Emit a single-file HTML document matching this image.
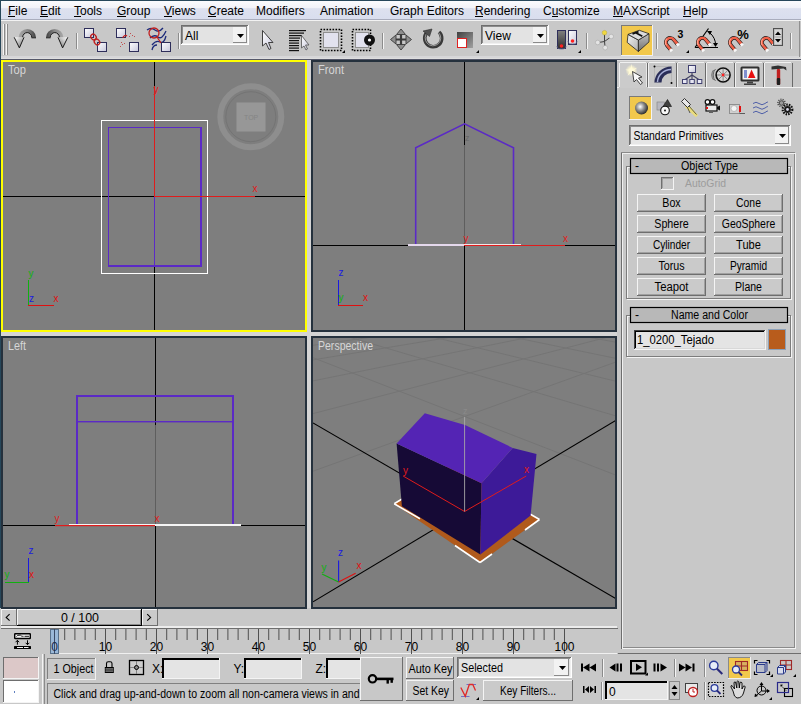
<!DOCTYPE html>
<html><head><meta charset="utf-8">
<style>
*{margin:0;padding:0}
html,body{width:801px;height:704px;overflow:hidden;background:#c8c8c8}
svg{position:absolute;left:0;top:0;display:block}
text{font-family:"Liberation Sans",sans-serif}
</style></head>
<body>
<svg width="801" height="704" viewBox="0 0 801 704">
<defs>
 <linearGradient id="gMenu" x1="0" y1="0" x2="0" y2="1">
  <stop offset="0" stop-color="#fbfbfd"/><stop offset="0.4" stop-color="#f1f2f8"/><stop offset="0.42" stop-color="#dde1ef"/><stop offset="1" stop-color="#d9deee"/>
 </linearGradient>
 <linearGradient id="gArrow" x1="0" y1="0" x2="1" y2="1">
  <stop offset="0" stop-color="#ffffff"/><stop offset="1" stop-color="#707070"/>
 </linearGradient>
 <linearGradient id="gArc" x1="0" y1="0" x2="1" y2="0">
  <stop offset="0" stop-color="#a8a8a8"/><stop offset="0.5" stop-color="#8a8a8a"/><stop offset="1" stop-color="#404040"/>
 </linearGradient>
 <linearGradient id="gBox" x1="0" y1="0" x2="1" y2="1">
  <stop offset="0" stop-color="#ffffff"/><stop offset="1" stop-color="#c8c8dc"/>
 </linearGradient>
 <linearGradient id="gDark" x1="0" y1="0" x2="1" y2="1">
  <stop offset="0" stop-color="#404040"/><stop offset="1" stop-color="#a0a0a0"/>
 </linearGradient>
 <linearGradient id="gDarkV" x1="0" y1="0" x2="0" y2="1">
  <stop offset="0" stop-color="#808080"/><stop offset="1" stop-color="#303030"/>
 </linearGradient>
 <radialGradient id="gSphere" cx="0.4" cy="0.4" r="0.6">
  <stop offset="0" stop-color="#ffffff"/><stop offset="0.5" stop-color="#909090"/><stop offset="1" stop-color="#303030"/>
 </radialGradient>
 <linearGradient id="gMag" x1="0" y1="0" x2="1" y2="1">
  <stop offset="0" stop-color="#ff8a70"/><stop offset="1" stop-color="#d03a20"/>
 </linearGradient>
<linearGradient id="gKeyF" x1="0" y1="0" x2="1" y2="1"><stop offset="0" stop-color="#f4f4f4"/><stop offset="1" stop-color="#b0b0b0"/></linearGradient>
<linearGradient id="gKeyR" x1="0" y1="0" x2="0" y2="1"><stop offset="0" stop-color="#c0c0c0"/><stop offset="1" stop-color="#707070"/></linearGradient>
<radialGradient id="gGlow"><stop offset="0" stop-color="#ffffff"/><stop offset="0.4" stop-color="#fff8d0"/><stop offset="1" stop-color="#fff8d0" stop-opacity="0"/></radialGradient>
</defs>
<!-- ===== MENU BAR ===== -->
<rect x="0" y="0" width="801" height="1" fill="#27475a"/>
<rect x="0" y="1" width="801" height="18" fill="url(#gMenu)"/>
<rect x="0" y="19" width="801" height="1" fill="#a9adbd"/>
<g font-size="12" fill="#000">
 <text x="8" y="15">File</text><rect x="8" y="16" width="7" height="1"/>
 <text x="40" y="15">Edit</text><rect x="40" y="16" width="8" height="1"/>
 <text x="74" y="15">Tools</text><rect x="74" y="16" width="7" height="1"/>
 <text x="117" y="15">Group</text><rect x="117" y="16" width="9" height="1"/>
 <text x="164" y="15">Views</text><rect x="164" y="16" width="8" height="1"/>
 <text x="208" y="15">Create</text><rect x="208" y="16" width="8" height="1"/>
 <text x="256" y="15">Modifiers</text>
 <text x="320" y="15">Animation</text>
 <text x="390" y="15">Graph Editors</text>
 <text x="475" y="15">Rendering</text><rect x="475" y="16" width="8" height="1"/>
 <text x="543" y="15">Customize</text><rect x="552" y="16" width="6" height="1"/>
 <text x="613" y="15">MAXScript</text><rect x="613" y="16" width="10" height="1"/>
 <text x="683" y="15">Help</text><rect x="683" y="16" width="8" height="1"/>
</g>
<!-- ===== TOOLBAR ===== -->
<rect x="0" y="20" width="801" height="1" fill="#f2f2f2"/>
<rect x="0" y="56" width="801" height="2" fill="#d6d6d8"/>
<rect x="0" y="58" width="801" height="1" fill="#dedede"/>
<rect x="0" y="59" width="617" height="1" fill="#55586a"/>
<rect x="0" y="0" width="1" height="608" fill="#27475a"/>
<!-- grip -->
<rect x="3" y="24" width="1" height="31" fill="#f6f6f6"/><rect x="4" y="24" width="1" height="31" fill="#8a8a8a"/>
<rect x="6" y="24" width="1" height="31" fill="#f6f6f6"/><rect x="7" y="24" width="1" height="31" fill="#8a8a8a"/>
<!-- undo -->
<g id="undo">
<path d="M18.6,37.5 A8.7,8.6 0 0 1 36,37.5 L31.8,37.5 A4.5,4.8 0 0 0 22.6,37.5 Z" fill="url(#gArc)"/>
<path d="M31.8,37.5 A4.5,4.8 0 0 0 22.6,37.5" fill="none" stroke="#1a1a1a" stroke-width="1"/>
<path d="M31.5,37.8 L36,37.8" stroke="#1a1a1a" stroke-width="1"/>
<path d="M14.2,37.3 L24,37.3 L19.4,47.9 Z" fill="url(#gArrow)"/>
<path d="M24,37.3 L19.4,47.9 L14.2,37.3" fill="none" stroke="#1a1a1a" stroke-width="1"/>
</g>
<!-- redo -->
<use href="#undo" transform="translate(82,0) scale(-1,1)"/>
<!-- sep -->
<rect x="76" y="33" width="1" height="16" fill="#8c8c8c"/><rect x="77" y="33" width="1" height="16" fill="#f4f4f4"/>
<!-- link -->
<rect x="84.5" y="28.5" width="9" height="9" fill="url(#gBox)" stroke="#2e2e5a"/>
<rect x="97.5" y="42.5" width="9" height="9" fill="url(#gBox)" stroke="#2e2e5a"/>
<ellipse cx="93.5" cy="37" rx="2.5" ry="3" fill="none" stroke="#c02020" stroke-width="1.3" transform="rotate(-40 93.5 37)"/>
<ellipse cx="97" cy="42" rx="2.5" ry="3" fill="none" stroke="#c02020" stroke-width="1.3" transform="rotate(-40 97 42)"/>
<!-- unlink -->
<rect x="116.5" y="28.5" width="9" height="9" fill="url(#gBox)" stroke="#2e2e5a"/>
<rect x="129.5" y="42.5" width="9" height="9" fill="url(#gBox)" stroke="#2e2e5a"/>
<path d="M123,38 A2.5,2.5 0 0 1 127,36" fill="none" stroke="#c02020" stroke-width="1.3"/>
<g fill="#c05050"><rect x="130" y="33" width="1" height="1"/><rect x="132" y="35" width="1" height="1"/><rect x="129" y="36" width="1" height="1"/><rect x="134" y="36" width="1" height="1"/><rect x="121" y="42" width="1" height="1"/><rect x="122" y="44" width="1" height="1"/><rect x="120" y="46" width="1" height="1"/><rect x="124" y="43" width="1" height="1"/></g>
<!-- bind -->
<path d="M150,38 Q154,34 158,37 T166,31" fill="none" stroke="#1c2a7a" stroke-width="1.3"/>
<path d="M152,45 Q156,40 160,42 T166,36" fill="none" stroke="#1c2a7a" stroke-width="1.3"/>
<path d="M147,30 Q151,27 155,30 T163,28" fill="none" stroke="#1c2a7a" stroke-width="1.3"/>
<path d="M152,50 Q153,45 157,45" fill="none" stroke="#1c2a7a" stroke-width="1.3"/>
<circle cx="154" cy="33" r="5" fill="none" stroke="#c02020" stroke-width="1.3"/>
<path d="M157,37 L161,43" stroke="#c02020" stroke-width="1.3"/>
<rect x="161.5" y="42.5" width="9" height="9" fill="url(#gBox)" stroke="#2e2e5a"/>
<!-- sep -->
<rect x="178" y="33" width="1" height="16" fill="#8c8c8c"/><rect x="179" y="33" width="1" height="16" fill="#f4f4f4"/>
<!-- dropdown All -->
<rect x="181" y="25" width="68" height="20" fill="#ffffff"/>
<rect x="181" y="25" width="67" height="19" fill="#6e6e6e"/>
<rect x="182" y="26" width="66" height="18" fill="#f0f0f0"/>
<rect x="182" y="26" width="65" height="17" fill="#8c8c8c"/>
<rect x="183" y="27" width="64" height="16" fill="#e3e3e3"/>
<rect x="233" y="27" width="14" height="16" fill="#f2f2f2"/>
<rect x="233" y="42" width="14" height="1" fill="#8a8a8a"/><rect x="246" y="27" width="1" height="16" fill="#8a8a8a"/>
<path d="M237,34 L244,34 L240.5,38 Z" fill="#000"/>
<text x="185" y="40" font-size="12" fill="#000">All</text>
<!-- select arrow -->
<path d="M262.5,30.5 L262.5,46 L266,43 L269,49.5 L271,48.5 L268.5,42.5 L273,42.5 Z" fill="url(#gBox)" stroke="#404040" stroke-width="1"/>
<!-- select by name -->
<g fill="#111"><rect x="289" y="30" width="17" height="1.2"/><rect x="289" y="32.5" width="15" height="1.2"/><rect x="289" y="35" width="13" height="1.2"/><rect x="289" y="37.5" width="11" height="1.2"/><rect x="289" y="40" width="10" height="1.2"/><rect x="289" y="42.5" width="10" height="1.2"/><rect x="289" y="45" width="10" height="1.2"/><rect x="289" y="47.5" width="10" height="1.2"/><rect x="289" y="50" width="10" height="1.2"/></g>
<path d="M301.5,35.5 L301.5,48 L304,46 L306,50 L307.5,49 L305.5,45 L309,45 Z" fill="url(#gBox)" stroke="#505050" stroke-width="0.8"/>
<!-- rect selection -->
<rect x="323.5" y="32.5" width="15" height="15" fill="#e2e2ee" stroke="#909090"/>
<rect x="320.5" y="29.5" width="21" height="21" fill="none" stroke="#000" stroke-width="1.6" stroke-dasharray="1.6 1.4"/>
<path d="M342,53 L345,53 L345,50 Z" fill="#000"/>
<!-- window/crossing -->
<rect x="355.5" y="32.5" width="13" height="15" fill="#e2e2ee" stroke="#909090"/>
<rect x="352.5" y="29.5" width="18" height="21" fill="none" stroke="#000" stroke-width="1.6" stroke-dasharray="1.6 1.4"/>
<circle cx="369.5" cy="40" r="5.5" fill="#111"/><circle cx="369.5" cy="40" r="1.6" fill="#fff"/>
<!-- sep -->
<rect x="382" y="33" width="1" height="16" fill="#8c8c8c"/><rect x="383" y="33" width="1" height="16" fill="#f4f4f4"/>
<!-- move -->
<path d="M401,32 L401,47 M393.5,39.5 L408.5,39.5" stroke="#3a3a3a" stroke-width="2.2"/>
<g fill="#8e8e8e" stroke="#3a3a3a" stroke-width="0.9" stroke-linejoin="round">
<path d="M401,29 L405.5,34.5 L396.5,34.5 Z"/>
<path d="M401,50 L405.5,44.5 L396.5,44.5 Z"/>
<path d="M390.5,39.5 L396,35 L396,44 Z"/>
<path d="M411.5,39.5 L406,35 L406,44 Z"/>
</g>
<!-- rotate -->
<path d="M428,31.5 A8.5,8.5 0 1 0 439,32" fill="none" stroke="#3a3a3a" stroke-width="3.6"/>
<path d="M428,32 A7.8,7.8 0 1 0 438.5,32.5" fill="none" stroke="#b0b0b0" stroke-width="1" opacity="0.8"/>
<path d="M423,31 L432,29 L429.5,36.5 Z" fill="#505050" stroke="#303030" stroke-width="0.6"/>
<!-- scale -->
<rect x="457" y="32" width="16" height="16" fill="url(#gDark)"/>
<rect x="457.5" y="38.5" width="9" height="9" fill="#fff" stroke="#e02020"/>
<path d="M476,53 L479,53 L479,50 Z" fill="#000"/>
<!-- dropdown View -->
<rect x="481" y="25" width="68" height="20" fill="#ffffff"/>
<rect x="481" y="25" width="67" height="19" fill="#6e6e6e"/>
<rect x="482" y="26" width="66" height="18" fill="#f0f0f0"/>
<rect x="482" y="26" width="65" height="17" fill="#8c8c8c"/>
<rect x="483" y="27" width="64" height="16" fill="#e3e3e3"/>
<rect x="533" y="27" width="14" height="16" fill="#f2f2f2"/>
<rect x="533" y="42" width="14" height="1" fill="#8a8a8a"/><rect x="546" y="27" width="1" height="16" fill="#8a8a8a"/>
<path d="M537,34 L544,34 L540.5,38 Z" fill="#000"/>
<text x="485" y="40" font-size="12" fill="#000">View</text>
<!-- pivot -->
<rect x="557.5" y="30.5" width="8" height="18" fill="url(#gDarkV)" stroke="#2e2e5a"/>
<rect x="568.5" y="30.5" width="8" height="14" fill="url(#gBox)" stroke="#2e2e5a"/>
<path d="M557,46 A4.5,3 0 0 0 566,46" fill="none" stroke="#606080" stroke-width="0.8"/>
<path d="M568,41 A4.5,3 0 0 0 577,41" fill="none" stroke="#606080" stroke-width="0.8"/>
<circle cx="561.5" cy="46" r="1.8" fill="#ff2020"/><circle cx="572.5" cy="41" r="1.8" fill="#ff2020"/>
<path d="M578,53 L581,53 L581,50 Z" fill="#000"/>
<!-- sep -->
<rect x="586" y="33" width="1" height="16" fill="#8c8c8c"/><rect x="587" y="33" width="1" height="16" fill="#f4f4f4"/>
<!-- manipulate -->
<path d="M604.5,34 L604.5,41.5 M604.5,41.5 L610,37.5 M604.5,41.5 L598.5,42.5 M604.5,41.5 L605,46.5" stroke="#404040" stroke-width="1" fill="none"/>
<circle cx="604.5" cy="32.7" r="2.3" fill="#f0d840" stroke="#b0a030" stroke-width="0.4"/>
<circle cx="611.2" cy="36.5" r="2.3" fill="#e4e4e4" stroke="#a0a0a0" stroke-width="0.5"/>
<circle cx="597.7" cy="42.5" r="2.3" fill="#e4e4e4" stroke="#a0a0a0" stroke-width="0.5"/>
<circle cx="605.2" cy="47.7" r="2.3" fill="#e4e4e4" stroke="#a0a0a0" stroke-width="0.5"/>
<!-- yellow keyboard override button -->
<rect x="621" y="25" width="32" height="31" fill="#f0f0f0"/>
<rect x="621" y="25" width="31" height="30" fill="#7a7a7a"/>
<rect x="622" y="26" width="30" height="29" fill="#f2c84c"/>
<path d="M628,34.4 L638.4,40 L638.4,51.5 L627.2,42.4 Z" fill="url(#gKeyF)" stroke="#202020" stroke-width="0.8"/>
<path d="M638.4,40 L649,33.7 L649,41.9 L638.4,51.5 Z" fill="url(#gKeyR)" stroke="#202020" stroke-width="0.8"/>
<path d="M628,34.4 L639.3,30.3 L649,33.7 L638.4,40 Z" fill="#dcdcdc" stroke="#202020" stroke-width="0.8"/>
<path d="M632.5,33.8 L638.5,31.6 M636.2,33 L642.3,36.3" stroke="#101010" stroke-width="1.8"/>
<!-- sep -->
<rect x="656" y="33" width="1" height="16" fill="#8c8c8c"/><rect x="657" y="33" width="1" height="16" fill="#f4f4f4"/>
<!-- magnets -->
<g id="mag" transform="translate(670.3,42.4) rotate(-39.7)">
<path d="M-4.4,6.3 L-4.4,0 A4.4,4.4 0 0 1 4.4,0 L4.4,6.3" fill="none" stroke="#1a1a1a" stroke-width="3.8"/>
<path d="M-4.4,6.3 L-4.4,0 A4.4,4.4 0 0 1 4.4,0 L4.4,6.3" fill="none" stroke="#f06048" stroke-width="2.6"/>
<path d="M-4.8,0 A4.4,4.4 0 0 1 0,-4.8" fill="none" stroke="#ffa590" stroke-width="1"/>
<rect x="-5.9" y="5.2" width="3" height="2.6" fill="#f8f8f8"/>
<rect x="2.9" y="5.2" width="3" height="2.6" fill="#f8f8f8"/>
</g>
<text x="677.5" y="37.8" font-size="10.5" font-weight="bold" fill="#000">3</text>
<path d="M686,53 L689,53 L689,50 Z" fill="#000"/>
<path d="M695,47.5 L718,47.5 M695,47.5 L708.5,28.5" stroke="#000" stroke-width="1.2" fill="none"/>
<path d="M709,32 Q716,38 715.5,45.5" stroke="#000" stroke-width="1" fill="none"/>
<path d="M707,31 L712,31 L710,35 Z M713,43 L718,43 L715.5,47 Z" fill="#000"/>
<use href="#mag" x="32" y="0"/>
<use href="#mag" x="64" y="0"/>
<text x="737.3" y="38.6" font-size="13" font-weight="bold" fill="#000">%</text>
<use href="#mag" x="96" y="0"/>
<rect x="773.5" y="28.5" width="9" height="17" fill="#a8a8a8" stroke="#505050"/>
<rect x="774.5" y="29.5" width="7" height="7" fill="#d8d8d8"/>
<rect x="774.5" y="37.5" width="7" height="7" fill="#d8d8d8"/>
<path d="M775,35 L781,35 L778,31.5 Z M775,39 L781,39 L778,42.5 Z" fill="#000"/>
<!-- sep -->
<rect x="790" y="33" width="1" height="16" fill="#8c8c8c"/><rect x="791" y="33" width="1" height="16" fill="#f4f4f4"/>
<rect x="799" y="21" width="1" height="36" fill="#909090"/>
<!-- ===== VIEWPORTS ===== -->
<rect x="1" y="60" width="616" height="548" fill="#d4d4d4"/>
<rect x="1" y="60" width="306" height="272" fill="#ffff00"/>
<rect x="3" y="62" width="302" height="268" fill="#7e7e7e"/>
<rect x="311" y="60" width="306" height="272" fill="#25313d"/>
<rect x="313" y="62" width="302" height="268" fill="#7e7e7e"/>
<rect x="1" y="336" width="306" height="273" fill="#25313d"/>
<rect x="3" y="338" width="302" height="269" fill="#7e7e7e"/>
<rect x="311" y="336" width="306" height="273" fill="#25313d"/>
<rect x="313" y="338" width="302" height="269" fill="#7e7e7e"/>

<!-- TOP -->
<g shape-rendering="crispEdges">
<rect x="3" y="196" width="302" height="1" fill="#000"/>
<rect x="154" y="62" width="1" height="268" fill="#000"/>
<rect x="101.5" y="120.5" width="106" height="153" fill="none" stroke="#fff" stroke-width="1.6"/>
<rect x="108.5" y="127.5" width="92.5" height="138.5" fill="none" stroke="#5b2ac6" stroke-width="1.6"/>
<rect x="154" y="196" width="1" height="70" fill="#5b2ac6"/>
<rect x="154" y="86" width="1" height="111" fill="#e01c1c"/>
<rect x="154" y="196" width="101" height="1" fill="#e01c1c"/>
</g>
<text x="153.5" y="93" font-size="10" fill="#e01c1c">y</text>
<text x="252.5" y="192" font-size="10" fill="#e01c1c">x</text>
<text x="8" y="74" font-size="12" fill="#d6d6d6" textLength="18" lengthAdjust="spacingAndGlyphs">Top</text>
<circle cx="250.8" cy="116.7" r="30.5" fill="none" stroke="#8e8e8e" stroke-width="6"/>
<circle cx="250.8" cy="116.7" r="25" fill="none" stroke="#747474" stroke-width="1"/>
<rect x="236.5" y="102.5" width="29" height="29" fill="#979797"/>
<text x="244" y="120" font-size="7" fill="#858585">TOP</text>
<!-- tripod top -->
<rect x="28" y="280" width="1" height="26" fill="#10b010"/>
<rect x="28" y="305" width="26" height="1" fill="#e01010"/>
<text x="28.5" y="277" font-size="10" fill="#10b010">y</text>
<text x="29" y="301.5" font-size="10" fill="#1a1ae0">z</text>
<text x="53.5" y="301.5" font-size="10" fill="#e01010">x</text>

<!-- FRONT -->
<g shape-rendering="crispEdges">
<rect x="313" y="245" width="302" height="1" fill="#000"/>
<rect x="464" y="62" width="1" height="83" fill="#000"/>
<rect x="464" y="245" width="1" height="85" fill="#000"/>
<rect x="464" y="145" width="1" height="100" fill="#5e5e5e"/>
</g>
<path d="M415.7,245 L415.7,147.8 L464.5,123.9 L513.5,147.8 L513.5,245" fill="none" stroke="#5b2ac6" stroke-width="1.6"/>
<rect x="408" y="244" width="56" height="2" fill="#e4d8ec"/>
<rect x="464" y="244" width="57" height="2" fill="#f2e6e6"/>
<rect x="464" y="245" width="101" height="1" fill="#e01c1c"/>
<text x="463.5" y="242" font-size="10" fill="#e01c1c">y</text>
<text x="563" y="242" font-size="10" fill="#e01c1c">x</text>
<text x="465" y="141" font-size="9" fill="#666">z</text>
<text x="318" y="74" font-size="12" fill="#d6d6d6" textLength="26" lengthAdjust="spacingAndGlyphs">Front</text>
<rect x="338" y="280" width="1" height="26" fill="#1a1ae0"/>
<rect x="338" y="305" width="25" height="1" fill="#e01010"/>
<text x="338.5" y="276" font-size="10" fill="#1a1ae0">z</text>
<text x="338.5" y="301" font-size="10" fill="#10b010">y</text>
<text x="363" y="301" font-size="10" fill="#e01010">x</text>

<!-- LEFT -->
<g shape-rendering="crispEdges">
<rect x="3" y="525" width="302" height="1" fill="#000"/>
<rect x="155" y="338" width="1" height="87" fill="#000"/>
<rect x="155" y="525" width="1" height="82" fill="#000"/>
<rect x="155" y="425" width="1" height="100" fill="#5e5e5e"/>
</g>
<path d="M77,525 L77,396 L233,396 L233,525" fill="none" stroke="#5b2ac6" stroke-width="2"/>
<rect x="77" y="421" width="156" height="1.4" fill="#5b2ac6"/>
<rect x="69" y="524" width="172" height="2" fill="#f4f4f4"/>
<rect x="55" y="525" width="100" height="1.2" fill="#e01c1c"/>
<text x="54.5" y="522" font-size="10" fill="#e01c1c">y</text>
<text x="154.5" y="522" font-size="10" fill="#e01c1c">x</text>
<text x="8" y="350" font-size="12" fill="#d6d6d6" textLength="18" lengthAdjust="spacingAndGlyphs">Left</text>
<rect x="28" y="558" width="1" height="25" fill="#1a1ae0"/>
<rect x="5" y="582" width="24" height="1" fill="#10b010"/>
<text x="28.5" y="553.5" font-size="10" fill="#1a1ae0">z</text>
<text x="4.5" y="578" font-size="10" fill="#10b010">y</text>
<text x="29" y="578" font-size="10" fill="#e01010">x</text>

<!-- PERSPECTIVE -->
<svg x="313" y="338" width="302" height="269" viewBox="313 338 302 269" overflow="hidden">
<g stroke="#757575" stroke-width="1" fill="none">
<path d="M313,357.7 L615,474.8"/>
<path d="M313,326.4 L615,415.7"/>
<path d="M313,308.0 L615,381.0"/>
<path d="M313,295.9 L615,358.2"/>
<path d="M313,287.4 L615,342.0"/>
<path d="M313,281.0 L615,330.0"/>
<path d="M313,276.1 L615,320.7"/>
<path d="M313,272.2 L615,313.2"/>
<path d="M313,269.0 L615,307.2"/>
<path d="M313,471.2 L615,362.3"/>
<path d="M313,413.6 L615,335.2"/>
<path d="M313,380.9 L615,319.9"/>
<path d="M313,359.9 L615,310.0"/>
<path d="M313,345.3 L615,303.1"/>
<path d="M313,334.5 L615,298.0"/>
<path d="M313,326.2 L615,294.1"/>
<path d="M313,319.6 L615,291.0"/>
<path d="M313,314.3 L615,288.5"/>
</g>
<path d="M313,422.9 L615.4,598.3" stroke="#000" stroke-width="1.1"/>
<path d="M615.4,420.6 L313,601.8" stroke="#000" stroke-width="1.1"/>
<!-- base -->
<path d="M394.2,503.8 L480,562.5 L539.5,519.5 L453.7,460.8 Z" fill="#b05a1c"/>
<path d="M394.2,503.8 L420,518.8 M394.2,503.8 L402,499 M480,562.5 L455,545.5 M480,562.5 L492,554 M539.5,519.5 L530,514 M539.5,519.5 L525,530" stroke="#fff" stroke-width="1.6"/>
<!-- walls -->
<path d="M396.6,443.4 L481.5,483.3 L480.3,554.4 L401.9,506.2 Z" fill="#160a36"/>
<path d="M481.5,483.3 L512.7,447.9 L536.5,453.9 L530.6,515.5 L480.3,554.4 Z" fill="#3d1a98"/>
<path d="M424.8,413.3 L465,425 L512.7,447.9 L481.5,483.3 L396.6,443.4 Z" fill="#5424b4"/>
<!-- axes -->
<path d="M464.6,511.5 L403.1,476 M464.6,511.5 L526.2,476" stroke="#e01c1c" stroke-width="1"/>
<path d="M464.6,511.5 L464.6,416.9" stroke="#a8a8a8" stroke-width="0.9"/>
<text x="403" y="474" font-size="10" fill="#e01c1c">y</text>
<text x="524" y="473" font-size="10" fill="#e01c1c">x</text>
<text x="463" y="414" font-size="9" fill="#8a8a8a">z</text>
</svg>
<text x="318" y="350" font-size="12" fill="#d6d6d6" textLength="55" lengthAdjust="spacingAndGlyphs">Perspective</text>
<path d="M338.6,582 L338.6,560.5" stroke="#1a1ae0" stroke-width="1.1"/>
<path d="M338.6,582 L322,574" stroke="#10b010" stroke-width="1.1"/>
<path d="M338.6,582 L355.6,573.2" stroke="#e01010" stroke-width="1.1"/>
<text x="338" y="556" font-size="10" fill="#1a1ae0">z</text>
<text x="321.5" y="570.5" font-size="10" fill="#10b010">y</text>
<text x="356.5" y="569" font-size="10" fill="#e01010">x</text>
<!-- ===== COMMAND PANEL ===== -->
<rect x="617" y="59" width="184" height="1" fill="#55586a"/>
<rect x="617" y="60" width="184" height="1" fill="#e0e0e0"/>
<!-- tabs -->
<g fill="none" stroke-width="1" shape-rendering="crispEdges">
 <path d="M619.5,87 L619.5,64.5 Q619.5,62.5 621.5,62.5 L645.5,62.5" stroke="#f0f0f0"/>
 <path d="M646.5,63 L646.5,87" stroke="#e8e8e8"/>
 <path d="M647.5,63 L647.5,87" stroke="#6a6a6a"/>
 <path d="M648.5,87 L648.5,64.5 Q648.5,62.5 650.5,62.5 L675,62.5" stroke="#f0f0f0"/>
 <path d="M676.5,63 L676.5,87" stroke="#6a6a6a"/>
 <path d="M677.5,87 L677.5,64.5 Q677.5,62.5 679.5,62.5 L704,62.5" stroke="#f0f0f0"/>
 <path d="M705.5,63 L705.5,87" stroke="#6a6a6a"/>
 <path d="M706.5,87 L706.5,64.5 Q706.5,62.5 708.5,62.5 L733,62.5" stroke="#f0f0f0"/>
 <path d="M734.5,63 L734.5,87" stroke="#6a6a6a"/>
 <path d="M735.5,87 L735.5,64.5 Q735.5,62.5 737.5,62.5 L762,62.5" stroke="#f0f0f0"/>
 <path d="M763.5,63 L763.5,87" stroke="#6a6a6a"/>
 <path d="M764.5,87 L764.5,64.5 Q764.5,62.5 766.5,62.5 L791,62.5" stroke="#f0f0f0"/>
 <path d="M792.5,63 L792.5,87" stroke="#6a6a6a"/>
 <path d="M617,87.5 L619,87.5 M648,87.5 L801,87.5" stroke="#f0f0f0"/>
</g>
<rect x="620" y="63" width="26" height="25" fill="#cbcbcb"/>
<!-- create icon -->
<circle cx="631.4" cy="70.5" r="6" fill="url(#gGlow)"/>
<path d="M631.4,63.5 L632.3,69.3 L637.5,67.5 L633.2,71 L636,76 L631.4,72.3 L627.5,76 L629.6,71 L625,69.8 L630.5,69.3 Z" fill="#fffbd8" opacity="0.9"/>
<path d="M632.5,71.5 L634,82 L636.5,79.5 L640.5,84.5 L642.5,83 L638.5,78 L642,77 Z" fill="#f8f8f8" stroke="#303030" stroke-width="0.9"/>
<!-- modify icon -->
<path d="M654.5,66.5 L671.5,66.5 L671.5,83.5" fill="none" stroke="#8a8a8a" stroke-width="0.6" stroke-dasharray="1 1"/>
<path d="M654.5,66.5 L654.5,83" fill="none" stroke="#8a8a8a" stroke-width="0.6" stroke-dasharray="1 1"/>
<circle cx="654.5" cy="66.5" r="1" fill="#000"/><circle cx="671.5" cy="83" r="1" fill="#000"/>
<path d="M654.5,82.5 A17,16 0 0 1 671.5,66.5 L671.5,73 A10,9.5 0 0 0 661.5,82.5 Z" fill="#2a2e58"/>
<path d="M657.5,82 A14,13 0 0 1 671,69.5" fill="none" stroke="#a8b0d8" stroke-width="1.5"/>
<!-- hierarchy icon -->
<path d="M692,72 L692,80 M692,75 L684.5,80 M692,75 L699.5,80" stroke="#404060" stroke-width="1.1" fill="none"/>
<rect x="688.5" y="65.5" width="7" height="7" fill="url(#gBox)" stroke="#404070"/>
<rect x="682.5" y="79.5" width="4.5" height="4" fill="#e8e8f4" stroke="#404070"/>
<rect x="689.8" y="79.5" width="4.5" height="4" fill="#e8e8f4" stroke="#404070"/>
<rect x="697.3" y="79.5" width="4.5" height="4" fill="#e8e8f4" stroke="#404070"/>
<!-- motion icon -->
<circle cx="723.1" cy="75" r="7" fill="#d8d8d8" stroke="#101010" stroke-width="1.6"/>
<g stroke="#505050" stroke-width="0.6"><path d="M717,75 L729,75 M723.1,69 L723.1,81 M719,71 L727.2,79 M727.2,71 L719,79"/></g>
<circle cx="723.1" cy="75" r="1.4" fill="#ff2020"/>
<path d="M715.5,69 A9,9 0 0 0 715.5,81 M713.5,70 A9,9 0 0 0 713.5,80" fill="none" stroke="#404040" stroke-width="0.7"/>
<!-- display icon -->
<rect x="740.5" y="66.5" width="19" height="15" rx="1.5" fill="#303030"/>
<rect x="742.5" y="68.5" width="15" height="11" fill="#f4f4f4"/>
<rect x="744" y="70" width="3" height="8" fill="#8090d0"/>
<path d="M748,78 L751.5,69.5 L755.5,78 Z" fill="#e81010"/>
<rect x="747" y="81.5" width="6" height="2" fill="#404040"/><rect x="744" y="83.5" width="12" height="1.5" fill="#404040"/>
<!-- utilities hammer -->
<path d="M771.5,66.5 L778,65.5 L786,67 L786.5,70.5 L783.5,68.5 L778,69 L771.5,69.5 Z" fill="#303030"/>
<rect x="776.8" y="69" width="3.4" height="16" rx="1" fill="#c02020"/>
<rect x="776.8" y="78" width="3.4" height="7" rx="1" fill="#202020"/>
<!-- category row -->
<rect x="629" y="96" width="23" height="24" fill="#f4f4f4"/>
<rect x="629" y="96" width="22" height="23" fill="#7a7a7a"/>
<rect x="630" y="97" width="21" height="22" fill="#f2c84c"/>
<circle cx="641.5" cy="108" r="6.5" fill="url(#gSphere)"/>
<!-- shapes -->
<rect x="657" y="102" width="7.5" height="8" fill="#b8b8c0" stroke="#808080" stroke-width="0.6"/>
<path d="M667.5,99.5 L663,106.5 L671.5,106.5 Z" fill="#404040" stroke="#101010" stroke-width="0.6"/>
<circle cx="665" cy="110.5" r="4.3" fill="#f8f8f8" stroke="#101010" stroke-width="1.1"/>
<circle cx="665" cy="110.5" r="0.9" fill="#000"/>
<!-- lights -->
<path d="M688,106 L698,116 L692,108 Z" fill="#f4f0a0" opacity="0.9"/>
<path d="M686,106 L697,116" stroke="#f0e070" stroke-width="3.2" opacity="0.85"/>
<path d="M681.5,101.5 L684.5,98.5 L690.5,104.5 L687.5,107.5 Z" fill="#e8e8e8" stroke="#202020" stroke-width="0.9"/>
<path d="M689,106 L696.5,114.5 M687.5,107.5 L690,113" stroke="#202020" stroke-width="0.7"/>
<!-- camera -->
<circle cx="707.5" cy="102" r="2.3" fill="#fff" stroke="#101010" stroke-width="1.2"/>
<circle cx="712.5" cy="102" r="2.3" fill="#fff" stroke="#101010" stroke-width="1.2"/>
<rect x="706" y="105" width="11" height="6" fill="#e8e8e8" stroke="#101010" stroke-width="1.2"/>
<rect x="706" y="107" width="2" height="2" fill="#e01010"/>
<path d="M717,107 L720,105.5 L720,110.5 L717,109" fill="#101010"/>
<rect x="709" y="111" width="4" height="2" fill="#606060"/>
<!-- helpers -->
<rect x="729.5" y="104.5" width="10" height="9" fill="#d0d0d0" stroke="#808080" stroke-width="0.8"/>
<circle cx="734" cy="108.5" r="3" fill="#f4f4f4" stroke="#a0a0a0" stroke-width="0.6"/>
<rect x="739" y="106" width="2" height="6" fill="#e01010"/>
<path d="M739.5,113.5 L745,113.5" stroke="#404040" stroke-width="0.8"/>
<!-- space warps -->
<path d="M753,103.5 Q756,101 759,103.5 T765,103.5 T768,102.5 M753,108 Q756,105.5 759,108 T765,108 T768,107 M753,112.5 Q756,110 759,112.5 T765,112.5 T768,111.5" fill="none" stroke="#5060a8" stroke-width="1"/>
<!-- systems -->
<circle cx="781.5" cy="103" r="3.6" fill="none" stroke="#505050" stroke-width="1.6" stroke-dasharray="1.1 1.1"/>
<circle cx="781.5" cy="103" r="2.3" fill="#9a9a9a" stroke="#303030" stroke-width="0.8"/>
<circle cx="787.5" cy="109.5" r="4.8" fill="none" stroke="#101010" stroke-width="2.2" stroke-dasharray="1.5 1.1"/>
<circle cx="787.5" cy="109.5" r="3.4" fill="#1a1a1a"/>
<circle cx="787.5" cy="109.5" r="1.4" fill="#d8d8e8"/>
<!-- dropdown standard primitives -->
<rect x="629" y="125" width="162" height="21" fill="#ffffff"/>
<rect x="629" y="125" width="161" height="20" fill="#6e6e6e"/>
<rect x="630" y="126" width="160" height="19" fill="#f0f0f0"/>
<rect x="630" y="126" width="159" height="18" fill="#8c8c8c"/>
<rect x="631" y="127" width="158" height="17" fill="#e6e6e6"/>
<rect x="775" y="127" width="14" height="17" fill="#f2f2f2"/>
<rect x="775" y="143" width="14" height="1" fill="#8a8a8a"/><rect x="788" y="127" width="1" height="17" fill="#8a8a8a"/>
<path d="M779,134 L786,134 L782.5,138 Z" fill="#000"/>
<text x="633.5" y="140" font-size="12" fill="#000" textLength="90" lengthAdjust="spacingAndGlyphs">Standard Primitives</text>
<!-- rollout outer -->
<rect x="621.5" y="152.5" width="173" height="495" fill="none" stroke="#8a8a8a"/>
<rect x="622.5" y="153.5" width="173" height="495" fill="none" stroke="#f0f0f0"/>

<!-- object type header -->
<rect x="627.5" y="167.5" width="164" height="132" fill="none" stroke="#f4f4f4"/>
<rect x="626.5" y="166.5" width="164" height="132" fill="none" stroke="#7c7c7c" stroke-dasharray="0"/>
<rect x="630.5" y="158.5" width="157" height="15" fill="#b8b8b8" stroke="#000" stroke-width="1.2"/>
<text x="635" y="170" font-size="12" fill="#000">-</text>
<text x="681" y="170" font-size="12" fill="#000" textLength="57" lengthAdjust="spacingAndGlyphs">Object Type</text>
<!-- autogrid -->
<rect x="661" y="177" width="13" height="13" fill="#f4f4f4"/>
<rect x="661" y="177" width="12" height="12" fill="#707070"/>
<rect x="662" y="178" width="11" height="11" fill="#c8c8c8"/>
<rect x="662" y="178" width="10" height="10" fill="#a0a0a0"/>
<rect x="663" y="179" width="9" height="9" fill="#c8c8c8"/>
<text x="685" y="187" font-size="11.5" fill="#9c9c9c" textLength="41" lengthAdjust="spacingAndGlyphs">AutoGrid</text>
<!-- buttons -->
<g id="btns" font-size="12" fill="#000" text-anchor="middle">
<rect x="637" y="194" width="69" height="18" fill="#6e6e6e"/>
<rect x="637" y="194" width="68" height="17" fill="#f4f4f4"/>
<rect x="638" y="195" width="67" height="16" fill="#a0a0a0"/>
<rect x="638" y="195" width="66" height="15" fill="#cacaca"/>
<text x="671.5" y="207" textLength="18.4" lengthAdjust="spacingAndGlyphs">Box</text>
<rect x="714" y="194" width="69" height="18" fill="#6e6e6e"/>
<rect x="714" y="194" width="68" height="17" fill="#f4f4f4"/>
<rect x="715" y="195" width="67" height="16" fill="#a0a0a0"/>
<rect x="715" y="195" width="66" height="15" fill="#cacaca"/>
<text x="748.5" y="207" textLength="24.8" lengthAdjust="spacingAndGlyphs">Cone</text>
<rect x="637" y="215" width="69" height="18" fill="#6e6e6e"/>
<rect x="637" y="215" width="68" height="17" fill="#f4f4f4"/>
<rect x="638" y="216" width="67" height="16" fill="#a0a0a0"/>
<rect x="638" y="216" width="66" height="15" fill="#cacaca"/>
<text x="671.5" y="228" textLength="34.5" lengthAdjust="spacingAndGlyphs">Sphere</text>
<rect x="714" y="215" width="69" height="18" fill="#6e6e6e"/>
<rect x="714" y="215" width="68" height="17" fill="#f4f4f4"/>
<rect x="715" y="216" width="67" height="16" fill="#a0a0a0"/>
<rect x="715" y="216" width="66" height="15" fill="#cacaca"/>
<text x="748.5" y="228" textLength="53.4" lengthAdjust="spacingAndGlyphs">GeoSphere</text>
<rect x="637" y="236" width="69" height="18" fill="#6e6e6e"/>
<rect x="637" y="236" width="68" height="17" fill="#f4f4f4"/>
<rect x="638" y="237" width="67" height="16" fill="#a0a0a0"/>
<rect x="638" y="237" width="66" height="15" fill="#cacaca"/>
<text x="671.5" y="249" textLength="37.2" lengthAdjust="spacingAndGlyphs">Cylinder</text>
<rect x="714" y="236" width="69" height="18" fill="#6e6e6e"/>
<rect x="714" y="236" width="68" height="17" fill="#f4f4f4"/>
<rect x="715" y="237" width="67" height="16" fill="#a0a0a0"/>
<rect x="715" y="237" width="66" height="15" fill="#cacaca"/>
<text x="748.5" y="249" textLength="24.8" lengthAdjust="spacingAndGlyphs">Tube</text>
<rect x="637" y="257" width="69" height="18" fill="#6e6e6e"/>
<rect x="637" y="257" width="68" height="17" fill="#f4f4f4"/>
<rect x="638" y="258" width="67" height="16" fill="#a0a0a0"/>
<rect x="638" y="258" width="66" height="15" fill="#cacaca"/>
<text x="671.5" y="270" textLength="26.2" lengthAdjust="spacingAndGlyphs">Torus</text>
<rect x="714" y="257" width="69" height="18" fill="#6e6e6e"/>
<rect x="714" y="257" width="68" height="17" fill="#f4f4f4"/>
<rect x="715" y="258" width="67" height="16" fill="#a0a0a0"/>
<rect x="715" y="258" width="66" height="15" fill="#cacaca"/>
<text x="748.5" y="270" textLength="37.2" lengthAdjust="spacingAndGlyphs">Pyramid</text>
<rect x="637" y="278" width="69" height="18" fill="#6e6e6e"/>
<rect x="637" y="278" width="68" height="17" fill="#f4f4f4"/>
<rect x="638" y="279" width="67" height="16" fill="#a0a0a0"/>
<rect x="638" y="279" width="66" height="15" fill="#cacaca"/>
<text x="671.5" y="291" textLength="34" lengthAdjust="spacingAndGlyphs">Teapot</text>
<rect x="714" y="278" width="69" height="18" fill="#6e6e6e"/>
<rect x="714" y="278" width="68" height="17" fill="#f4f4f4"/>
<rect x="715" y="279" width="67" height="16" fill="#a0a0a0"/>
<rect x="715" y="279" width="66" height="15" fill="#cacaca"/>
<text x="748.5" y="291" textLength="27" lengthAdjust="spacingAndGlyphs">Plane</text>
</g>
<!-- name and color -->

<rect x="627.5" y="316.5" width="164" height="41" fill="none" stroke="#f4f4f4"/>
<rect x="626.5" y="315.5" width="164" height="41" fill="none" stroke="#7c7c7c"/>
<rect x="630.5" y="307.5" width="157" height="15" fill="#b8b8b8" stroke="#000" stroke-width="1.2"/>
<text x="635" y="319" font-size="12" fill="#000">-</text>
<text x="671" y="319" font-size="12" fill="#000" textLength="77" lengthAdjust="spacingAndGlyphs">Name and Color</text>
<rect x="634" y="330" width="132" height="20" fill="#f4f4f4"/>
<rect x="634" y="330" width="131" height="19" fill="#404040"/>
<rect x="635" y="331" width="130" height="18" fill="#d8d8d8"/>
<rect x="635" y="331" width="129" height="17" fill="#000"/>
<rect x="636" y="332" width="128" height="16" fill="#e4e4e4"/>
<text x="637" y="344" font-size="12" fill="#000" textLength="77" lengthAdjust="spacingAndGlyphs">1_0200_Tejado</text>
<rect x="768.5" y="329.5" width="17" height="20" fill="#b85c1c" stroke="#8ca0b8"/>
<!-- ===== TIME SLIDER ===== -->
<rect x="1" y="609" width="616" height="17" fill="#c8c8c8"/>
<!-- < button -->
<rect x="1" y="609" width="16" height="17" fill="#6e6e6e"/>
<rect x="1" y="609" width="15" height="16" fill="#f4f4f4"/>
<rect x="2" y="610" width="14" height="15" fill="#cacaca"/>
<path d="M9.6,614.2 L6.2,617.4 L9.6,620.6" fill="none" stroke="#000" stroke-width="1.1"/>
<!-- thumb -->
<rect x="17" y="609" width="125" height="17" fill="#000"/>
<rect x="17" y="609" width="124" height="16" fill="#f4f4f4"/>
<rect x="18" y="610" width="123" height="15" fill="#8a8a8a"/>
<rect x="18" y="610" width="122" height="14" fill="#cacaca"/>
<text x="80" y="622" font-size="12" fill="#000" text-anchor="middle" textLength="38" lengthAdjust="spacingAndGlyphs">0 / 100</text>
<!-- > button -->
<rect x="142" y="609" width="16" height="17" fill="#6e6e6e"/>
<rect x="142" y="609" width="15" height="16" fill="#f4f4f4"/>
<rect x="143" y="610" width="14" height="15" fill="#cacaca"/>
<path d="M147.2,614.2 L150.6,617.4 L147.2,620.6" fill="none" stroke="#000" stroke-width="1.1"/>
<rect x="1" y="626" width="616" height="2" fill="#ececec"/>
<rect x="1" y="628" width="617" height="1" fill="#6e6e6e"/>
<!-- ===== TRACK BAR ===== -->
<!-- track bar icon -->
<rect x="14.7" y="633.7" width="15.6" height="4.8" rx="0.5" fill="#f8f8f8" stroke="#000" stroke-width="1.4"/>
<path d="M16.5,636.5 Q17.5,635 19,635.2 L20.5,635.2 Q21.5,636.3 22.5,636.3 L23.5,636.3 M24.5,636.3 L29,636.3" fill="none" stroke="#000" stroke-width="0.9"/>
<rect x="14" y="646" width="17" height="3" rx="0.5" fill="#000"/>
<rect x="17" y="647" width="6" height="1" fill="#f0f0f0"/><rect x="24" y="647" width="4.5" height="1" fill="#f0f0f0"/>
<path d="M17.4,640.3 L17.4,644.7 M15.6,642.2 L17.4,640.3 L19.2,642.2 M27.5,640.3 L27.5,644.7 M25.7,642.8 L27.5,644.7 L29.3,642.8" fill="none" stroke="#000" stroke-width="1"/>
<rect x="35" y="629" width="582" height="24" fill="#c8c8c8"/>
<rect x="50" y="653" width="567" height="1" fill="#f0f0f0"/>
<rect x="54.0" y="629" width="1" height="25" fill="#505050"/>
<text x="54.5" y="650.5" font-size="12" fill="#000" text-anchor="middle">0</text>
<rect x="64.2" y="629" width="1" height="11" fill="#505050"/>
<rect x="74.4" y="629" width="1" height="11" fill="#505050"/>
<rect x="84.6" y="629" width="1" height="11" fill="#505050"/>
<rect x="94.8" y="629" width="1" height="11" fill="#505050"/>
<rect x="105.0" y="629" width="1" height="25" fill="#505050"/>
<text x="105.5" y="650.5" font-size="12" fill="#000" text-anchor="middle">10</text>
<rect x="115.2" y="629" width="1" height="11" fill="#505050"/>
<rect x="125.4" y="629" width="1" height="11" fill="#505050"/>
<rect x="135.6" y="629" width="1" height="11" fill="#505050"/>
<rect x="145.8" y="629" width="1" height="11" fill="#505050"/>
<rect x="156.0" y="629" width="1" height="25" fill="#505050"/>
<text x="156.5" y="650.5" font-size="12" fill="#000" text-anchor="middle">20</text>
<rect x="166.2" y="629" width="1" height="11" fill="#505050"/>
<rect x="176.4" y="629" width="1" height="11" fill="#505050"/>
<rect x="186.6" y="629" width="1" height="11" fill="#505050"/>
<rect x="196.8" y="629" width="1" height="11" fill="#505050"/>
<rect x="207.0" y="629" width="1" height="25" fill="#505050"/>
<text x="207.5" y="650.5" font-size="12" fill="#000" text-anchor="middle">30</text>
<rect x="217.2" y="629" width="1" height="11" fill="#505050"/>
<rect x="227.4" y="629" width="1" height="11" fill="#505050"/>
<rect x="237.6" y="629" width="1" height="11" fill="#505050"/>
<rect x="247.8" y="629" width="1" height="11" fill="#505050"/>
<rect x="258.0" y="629" width="1" height="25" fill="#505050"/>
<text x="258.5" y="650.5" font-size="12" fill="#000" text-anchor="middle">40</text>
<rect x="268.2" y="629" width="1" height="11" fill="#505050"/>
<rect x="278.4" y="629" width="1" height="11" fill="#505050"/>
<rect x="288.6" y="629" width="1" height="11" fill="#505050"/>
<rect x="298.8" y="629" width="1" height="11" fill="#505050"/>
<rect x="309.0" y="629" width="1" height="25" fill="#505050"/>
<text x="309.5" y="650.5" font-size="12" fill="#000" text-anchor="middle">50</text>
<rect x="319.2" y="629" width="1" height="11" fill="#505050"/>
<rect x="329.4" y="629" width="1" height="11" fill="#505050"/>
<rect x="339.6" y="629" width="1" height="11" fill="#505050"/>
<rect x="349.8" y="629" width="1" height="11" fill="#505050"/>
<rect x="360.0" y="629" width="1" height="25" fill="#505050"/>
<text x="360.5" y="650.5" font-size="12" fill="#000" text-anchor="middle">60</text>
<rect x="370.2" y="629" width="1" height="11" fill="#505050"/>
<rect x="380.4" y="629" width="1" height="11" fill="#505050"/>
<rect x="390.6" y="629" width="1" height="11" fill="#505050"/>
<rect x="400.8" y="629" width="1" height="11" fill="#505050"/>
<rect x="411.0" y="629" width="1" height="25" fill="#505050"/>
<text x="411.5" y="650.5" font-size="12" fill="#000" text-anchor="middle">70</text>
<rect x="421.2" y="629" width="1" height="11" fill="#505050"/>
<rect x="431.4" y="629" width="1" height="11" fill="#505050"/>
<rect x="441.6" y="629" width="1" height="11" fill="#505050"/>
<rect x="451.8" y="629" width="1" height="11" fill="#505050"/>
<rect x="462.0" y="629" width="1" height="25" fill="#505050"/>
<text x="462.5" y="650.5" font-size="12" fill="#000" text-anchor="middle">80</text>
<rect x="472.2" y="629" width="1" height="11" fill="#505050"/>
<rect x="482.4" y="629" width="1" height="11" fill="#505050"/>
<rect x="492.6" y="629" width="1" height="11" fill="#505050"/>
<rect x="502.8" y="629" width="1" height="11" fill="#505050"/>
<rect x="513.0" y="629" width="1" height="25" fill="#505050"/>
<text x="513.5" y="650.5" font-size="12" fill="#000" text-anchor="middle">90</text>
<rect x="523.2" y="629" width="1" height="11" fill="#505050"/>
<rect x="533.4" y="629" width="1" height="11" fill="#505050"/>
<rect x="543.6" y="629" width="1" height="11" fill="#505050"/>
<rect x="553.8" y="629" width="1" height="11" fill="#505050"/>
<rect x="564.0" y="629" width="1" height="25" fill="#505050"/>
<text x="564.5" y="650.5" font-size="12" fill="#000" text-anchor="middle">100</text>
<rect x="50.5" y="629.5" width="8" height="24" fill="#9ab8d8" stroke="#58708a" stroke-width="1"/>
<rect x="54" y="629" width="1" height="25" fill="#3a4a66"/>
<text x="54.5" y="650.5" font-size="12" fill="#1a2a4a" text-anchor="middle">0</text>

<!-- ===== STATUS BAR ===== -->
<rect x="1" y="654" width="617" height="50" fill="#c8c8c8"/>
<rect x="618" y="653" width="183" height="1" fill="#6e6e6e"/>
<rect x="622" y="648" width="174" height="1" fill="#f4f4f4"/>
<rect x="621" y="153" width="1" height="496" fill="#6e6e6e"/>
<!-- color boxes -->
<rect x="3" y="657" width="36" height="22" fill="#f4f4f4"/>
<rect x="3" y="657" width="35" height="21" fill="#6e6e6e"/>
<rect x="4" y="658" width="34" height="20" fill="#dcc8c8"/>
<rect x="3" y="680" width="36" height="23" fill="#f4f4f4"/>
<rect x="3" y="680" width="35" height="22" fill="#6e6e6e"/>
<rect x="4" y="681" width="34" height="21" fill="#ffffff"/>
<rect x="14" y="691" width="1" height="2" fill="#6080c0"/>
<rect x="42" y="654" width="1" height="50" fill="#f4f4f4"/>
<rect x="44" y="654" width="1" height="50" fill="#8a8a8a"/>
<!-- 1 Object -->
<rect x="47" y="658" width="49" height="22" fill="#f0f0f0"/>
<rect x="47" y="658" width="48" height="21" fill="#808080"/>
<rect x="48" y="659" width="47" height="20" fill="#c8c8c8"/>
<text x="53.5" y="672.5" font-size="12" fill="#000" textLength="40" lengthAdjust="spacingAndGlyphs">1 Object</text>
<!-- lock -->
<path d="M106.5,667 L106.5,663.5 Q106.5,661.8 108.3,661.8 L110.2,661.8 Q112,661.8 112,663.5 L112,667" fill="none" stroke="#000" stroke-width="1.1"/>
<rect x="104.8" y="667" width="9" height="6" fill="#000"/>
<rect x="105.5" y="668.5" width="7.6" height="0.9" fill="#c8c8c8"/><rect x="105.5" y="670.6" width="7.6" height="0.9" fill="#c8c8c8"/>
<!-- absolute -->
<rect x="129.5" y="660.5" width="14" height="14" fill="#cdcdcd" stroke="#000" stroke-width="1.3"/>
<path d="M136.5,661 L136.5,674 M130,667.5 L143,667.5" stroke="#7a7a7a" stroke-width="0.9"/>
<circle cx="136.5" cy="667.5" r="2" fill="#8a8a8a" stroke="#000" stroke-width="1"/>
<!-- XYZ -->
<g font-size="12" fill="#000">
<text x="152" y="673">X:</text><text x="233.5" y="673">Y:</text><text x="315.5" y="673">Z:</text>
</g>
<g>
<rect x="162" y="658" width="58" height="21" fill="#f4f4f4"/>
<rect x="162" y="658" width="57" height="20" fill="#000"/>
<rect x="164" y="660" width="55" height="18" fill="#e4e4e4"/>
<rect x="244" y="658" width="58" height="21" fill="#f4f4f4"/>
<rect x="244" y="658" width="57" height="20" fill="#000"/>
<rect x="246" y="660" width="55" height="18" fill="#e4e4e4"/>
<rect x="326" y="658" width="36" height="21" fill="#f4f4f4"/>
<rect x="326" y="658" width="36" height="20" fill="#000"/>
<rect x="328" y="660" width="34" height="18" fill="#e4e4e4"/>
</g>
<!-- prompt -->
<rect x="47" y="683" width="314" height="21" fill="#808080"/>
<rect x="48" y="684" width="313" height="20" fill="#c8c8c8"/>
<text x="53.5" y="697.5" font-size="12" fill="#000" textLength="306" lengthAdjust="spacingAndGlyphs">Click and drag up-and-down to zoom all non-camera views in and</text>
<!-- key box -->
<rect x="360" y="657" width="43" height="44" fill="#6e6e6e"/>
<rect x="360" y="657" width="42" height="43" fill="#f4f4f4"/>
<rect x="361" y="658" width="41" height="42" fill="#c8c8c8"/>
<circle cx="372.5" cy="678.8" r="3.7" fill="none" stroke="#000" stroke-width="2.2"/>
<rect x="375.5" y="677.6" width="18" height="2.6" fill="#000"/>
<rect x="386.5" y="679" width="2.4" height="4.6" fill="#000"/><rect x="390.5" y="679" width="2.4" height="3.8" fill="#000"/>
<!-- Auto Key / Set Key -->
<g font-size="12" fill="#000">
<rect x="406" y="657" width="48" height="22" fill="#6e6e6e"/>
<rect x="406" y="657" width="47" height="21" fill="#f4f4f4"/>
<rect x="407" y="658" width="46" height="20" fill="#cacaca"/>
<text x="408.5" y="672.5" textLength="44" lengthAdjust="spacingAndGlyphs">Auto Key</text>
<rect x="406" y="680" width="48" height="21" fill="#6e6e6e"/>
<rect x="406" y="680" width="47" height="20" fill="#f4f4f4"/>
<rect x="407" y="681" width="46" height="19" fill="#cacaca"/>
<text x="412.5" y="695" textLength="36.5" lengthAdjust="spacingAndGlyphs">Set Key</text>
</g>
<!-- Selected dropdown -->
<rect x="457" y="657" width="115" height="21" fill="#ffffff"/>
<rect x="457" y="657" width="114" height="20" fill="#6e6e6e"/>
<rect x="458" y="658" width="113" height="19" fill="#f0f0f0"/>
<rect x="458" y="658" width="112" height="18" fill="#8c8c8c"/>
<rect x="459" y="659" width="111" height="17" fill="#e3e3e3"/>
<rect x="554" y="659" width="15" height="17" fill="#f2f2f2"/>
<rect x="554" y="675" width="15" height="1" fill="#8a8a8a"/><rect x="568" y="659" width="1" height="17" fill="#8a8a8a"/>
<path d="M559,666 L566,666 L562.5,670 Z" fill="#000"/>
<text x="461" y="672" font-size="12" fill="#000" textLength="42" lengthAdjust="spacingAndGlyphs">Selected</text>
<!-- key mode icon -->
<path d="M466.5,684.5 L476,684.5 M461,696.5 L469.5,696.5" stroke="#7070c8" stroke-width="1" fill="none"/>
<path d="M460.8,687.5 L465.3,696.3 L469.3,684.5 L472.8,684.5 L475.5,690.5" fill="none" stroke="#e02828" stroke-width="1.3"/>
<path d="M476,700 L479,700 L479,697 Z" fill="#000"/>
<!-- Key filters -->
<rect x="483" y="680" width="90" height="21" fill="#6e6e6e"/>
<rect x="483" y="680" width="89" height="20" fill="#f4f4f4"/>
<rect x="484" y="681" width="88" height="19" fill="#cacaca"/>
<text x="500" y="695" font-size="12" fill="#000" textLength="56" lengthAdjust="spacingAndGlyphs">Key Filters...</text>
<!-- playback row 1 -->
<g fill="#000">
<rect x="581" y="663.5" width="2" height="8"/><path d="M583,667.5 L589.5,663.5 L589.5,671.5 Z M589.5,667.5 L596,663.5 L596,671.5 Z"/>
<rect x="602" y="659" width="1" height="18" fill="#8a8a8a"/><rect x="603" y="659" width="1" height="18" fill="#f4f4f4"/>
<path d="M609.5,667.5 L615.5,663.5 L615.5,671.5 Z"/><rect x="616.5" y="663.5" width="2" height="8"/><rect x="620" y="663.5" width="2" height="8"/>
<rect x="631" y="661" width="14.5" height="12.5" fill="none" stroke="#000" stroke-width="2"/>
<path d="M636,663.5 L642,667.3 L636,671 Z"/>
<path d="M645,675.5 L648,675.5 L648,672.5 Z"/>
<rect x="653.5" y="663.5" width="2" height="8"/><rect x="657" y="663.5" width="2" height="8"/><path d="M660.5,663.5 L667,667.5 L660.5,671.5 Z"/>
<rect x="674" y="659" width="1" height="18" fill="#8a8a8a"/><rect x="675" y="659" width="1" height="18" fill="#f4f4f4"/>
<path d="M679,663.5 L685.5,667.5 L679,671.5 Z M685.5,663.5 L692,667.5 L685.5,671.5 Z"/><rect x="692.5" y="663.5" width="2" height="8"/>
<rect x="704" y="659" width="1" height="18" fill="#8a8a8a"/><rect x="705" y="659" width="1" height="18" fill="#f4f4f4"/>
</g>
<!-- zoom icons -->
<circle cx="713.8" cy="665.5" r="4.2" fill="#e6ecf8" stroke="#2a3a9a" stroke-width="1.4"/>
<path d="M716.8,668.5 L722.3,674" stroke="#2a2a7a" stroke-width="2"/>
<rect x="728" y="657" width="23" height="22" fill="#f0f0f0"/>
<rect x="728" y="657" width="22" height="21" fill="#8a8a8a"/>
<rect x="729" y="658" width="21" height="20" fill="#f2c84c"/>
<rect x="735.5" y="661.5" width="12" height="9" fill="#d8b060" stroke="#a02828" stroke-width="1.1"/>
<path d="M741.5,661.5 L741.5,670.5 M735.5,666 L747.5,666" stroke="#a02828" stroke-width="1.1"/>
<circle cx="736" cy="669.5" r="3.5" fill="#e6ecf8" stroke="#2a3a9a" stroke-width="1.3"/>
<path d="M738.5,672 L742,675.5" stroke="#2a2a7a" stroke-width="1.8"/>
<path d="M754.5,663.5 L754.5,660.5 L757.5,660.5 M766.5,660.5 L769.5,660.5 L769.5,663.5 M754.5,671.5 L754.5,674.5 L757.5,674.5 M766.5,674.5 L769.5,674.5 L769.5,671.5" fill="none" stroke="#000" stroke-width="1.2"/>
<path d="M756.5,664.5 L758.5,662.5 L767,662.5 L767,670.5 L765,672.5 L756.5,672.5 Z" fill="#b8bcc8" stroke="#2a3a8a" stroke-width="1"/>
<path d="M756.5,664.5 L765,664.5 L767,662.5 M765,664.5 L765,672.5" fill="none" stroke="#2a3a8a" stroke-width="1"/>
<path d="M770,677 L773,677 L773,674 Z" fill="#000"/>
<rect x="780.5" y="660.5" width="11" height="9" fill="none" stroke="#a02828" stroke-width="1.1"/>
<path d="M786,660.5 L786,669.5 M780.5,665 L791.5,665" stroke="#a02828" stroke-width="1.1"/>
<path d="M777.5,667.5 L779.5,665.5 L785.5,665.5 L785.5,672 L783.5,674 L777.5,674 Z" fill="#d8dcec" stroke="#2a3a8a" stroke-width="1"/>
<path d="M777.5,667.5 L783.5,667.5 L785.5,665.5 M783.5,667.5 L783.5,674" fill="none" stroke="#2a3a8a" stroke-width="1"/>
<path d="M793,677 L796,677 L796,674 Z" fill="#000"/>
<!-- row 2 -->
<g fill="#000">
<rect x="583" y="686" width="1.5" height="7"/><path d="M585,689.5 L589,686 L589,693 Z M594,689.5 L590,686 L590,693 Z"/><rect x="594.5" y="686" width="1.5" height="7"/>
<rect x="601" y="682" width="1" height="18" fill="#8a8a8a"/><rect x="602" y="682" width="1" height="18" fill="#f4f4f4"/>
</g>
<rect x="605" y="681" width="63" height="19" fill="#f4f4f4"/>
<rect x="605" y="681" width="62" height="18" fill="#000"/>
<rect x="607" y="683" width="60" height="16" fill="#e4e4e4"/>
<text x="609" y="696" font-size="12" fill="#000">0</text>
<rect x="669.5" y="681.5" width="10" height="18" fill="#c8c8c8" stroke="#8a8a8a" stroke-width="1"/>
<path d="M671.5,689 L677.5,689 L674.5,685 Z M671.5,692 L677.5,692 L674.5,696 Z" fill="#000"/>
<!-- time config -->
<rect x="685.5" y="683.5" width="12" height="9" fill="#e8e8e8" stroke="#404040" stroke-width="1"/>
<circle cx="693" cy="692" r="4.5" fill="#fff" stroke="#c02020" stroke-width="1.3"/>
<path d="M693,689 L693,692 L695,692" stroke="#c02020" stroke-width="1" fill="none"/>
<rect x="704" y="682" width="1" height="18" fill="#8a8a8a"/><rect x="705" y="682" width="1" height="18" fill="#f4f4f4"/>
<!-- region zoom -->
<rect x="708.5" y="682.5" width="15" height="14" fill="#d4d4d4" stroke="#000" stroke-width="1.2" stroke-dasharray="1.6 1.2"/>
<circle cx="714.5" cy="688" r="3.4" fill="#e6ecf8" stroke="#2a3a9a" stroke-width="1.3"/>
<path d="M717,690.5 L720.5,694" stroke="#2a2a7a" stroke-width="1.8"/>
<!-- pan hand -->
<path d="M733,691 L731,687 Q730.5,685.5 732,685.5 L734.5,689 L734,683 Q734,681.5 735.5,682 L736.8,688 L737,681.5 Q737.5,680.5 738.7,681.5 L739.3,688 L740,682.5 Q741,681.5 742,682.8 L742,689 L743.5,686 Q745,685.5 745.2,687 L743.5,693 Q742,698 737,698 Q734,697.5 733,691 Z" fill="#dcdcdc" stroke="#000" stroke-width="0.9"/>
<!-- orbit -->
<circle cx="761.5" cy="690.5" r="4.5" fill="none" stroke="#000" stroke-width="1"/>
<path d="M761.5,683 L761.5,691 L769,691 M761.5,691 L755.5,696" stroke="#000" stroke-width="1" fill="none"/>
<path d="M761.5,682 L759.5,685 L763.5,685 Z M770,691 L767,689 L767,693 Z M754.5,697 L755,693.5 L758,696 Z" fill="#000"/>
<path d="M769,700 L772,700 L772,697 Z" fill="#000"/>
<!-- maximize -->
<rect x="784.5" y="688.5" width="8" height="8" fill="#c8c8c8" stroke="#000" stroke-width="1.1"/>
<rect x="777.5" y="682.5" width="11" height="10" fill="none" stroke="#2a2a8a" stroke-width="1.2"/>
<path d="M781,685.5 L786.5,691" stroke="#000" stroke-width="0.9" stroke-dasharray="1.2 0.8"/>
<path d="M780.5,684.5 L783,684.8 L780.8,687 Z" fill="#000"/>
</svg></body></html>
